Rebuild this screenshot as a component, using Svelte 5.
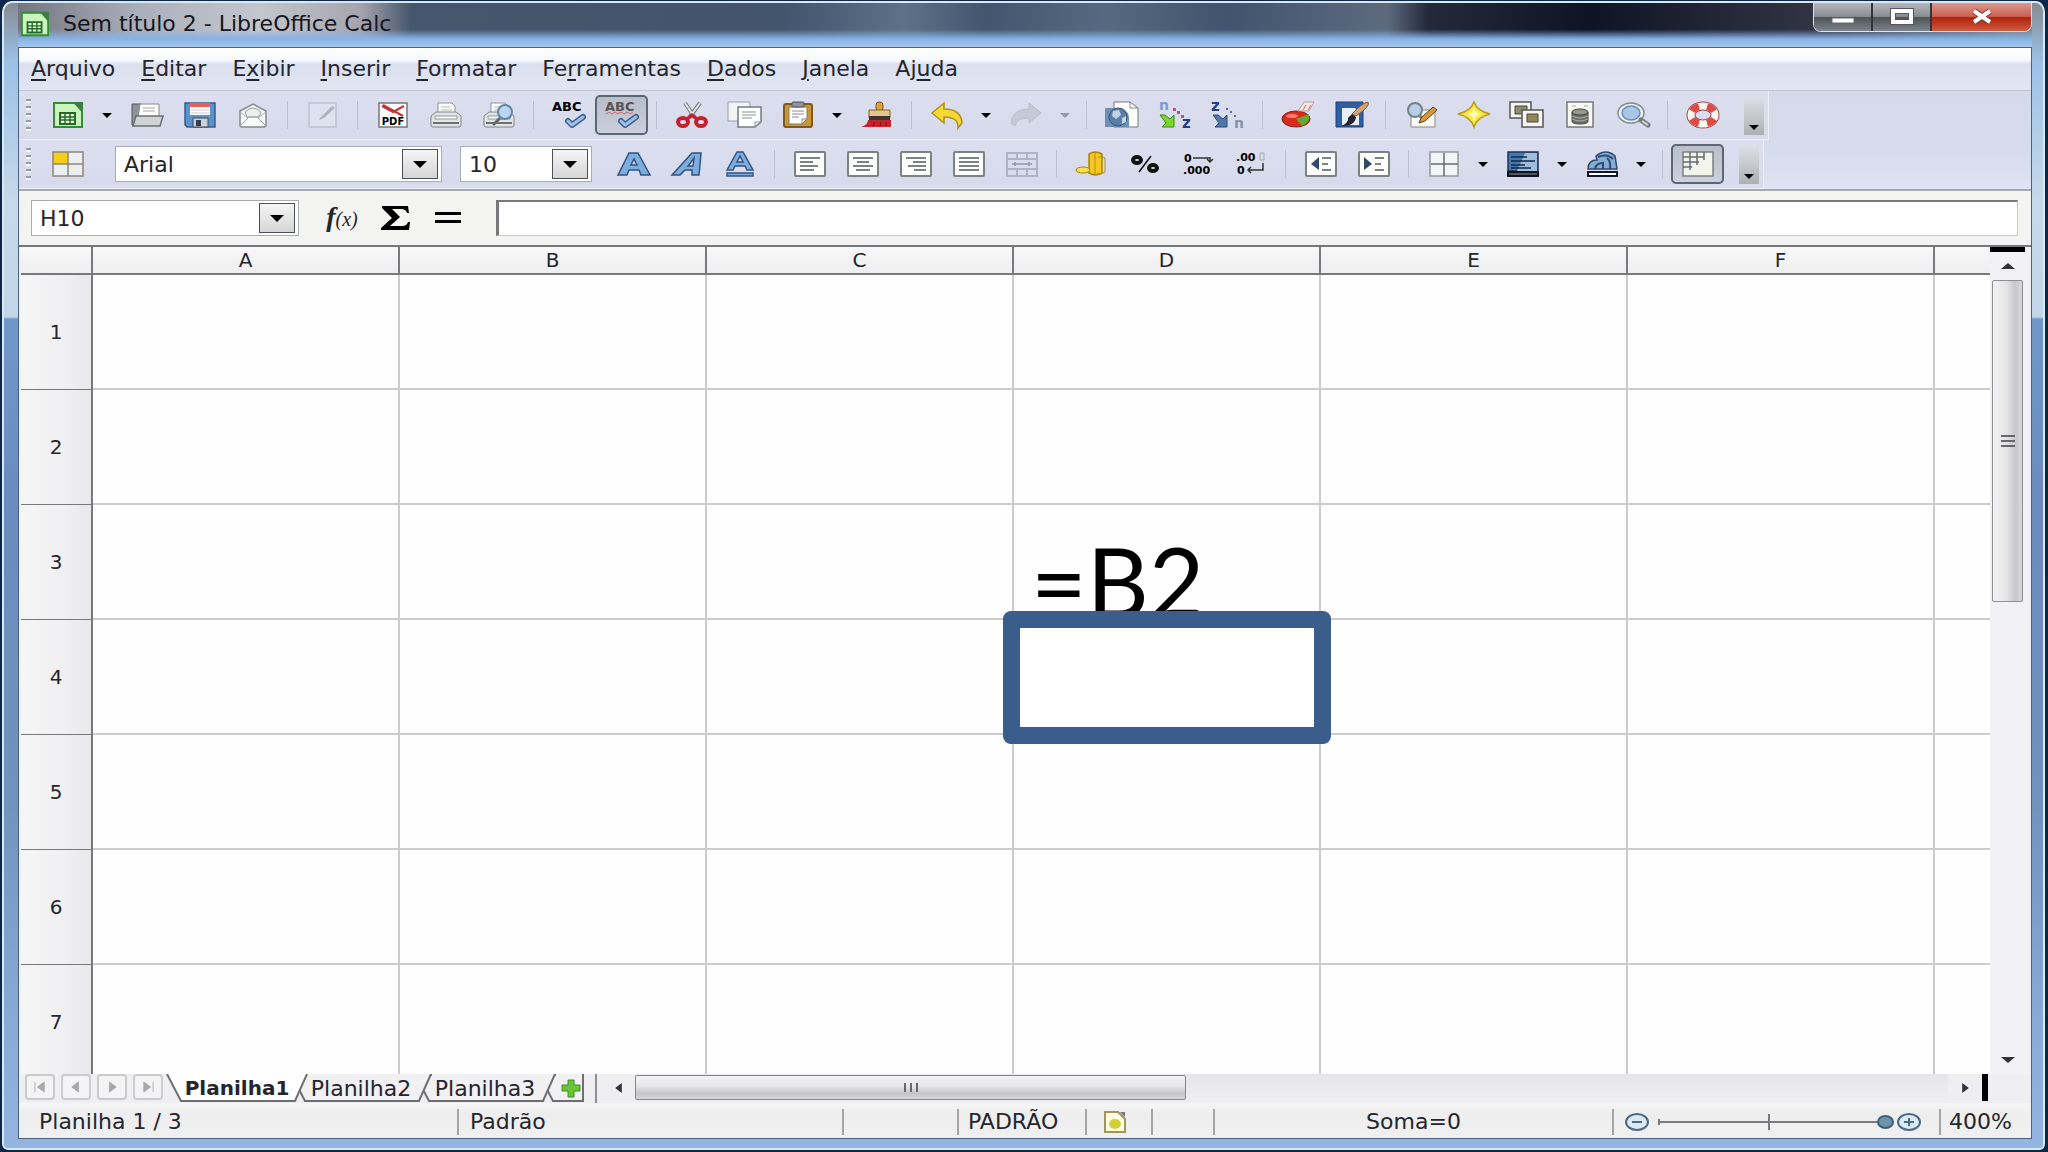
<script lang="ts">
  type Tool = {
    kind?: "button" | "sep" | "arrow";
    icon?: string;
    label?: string;
    pressed?: boolean;
    off?: boolean;
  };

  const sep: Tool = { kind: "sep" };
  const arrow: Tool = { kind: "arrow", label: "Mais opções" };
  const arrowOff: Tool = { kind: "arrow", label: "Mais opções", off: true };

  const menus = [
    ["", "A", "rquivo"],
    ["", "E", "ditar"],
    ["E", "x", "ibir"],
    ["", "I", "nserir"],
    ["", "F", "ormatar"],
    ["Fe", "r", "ramentas"],
    ["", "D", "ados"],
    ["", "J", "anela"],
    ["Aj", "u", "da"],
  ];

  const standard: Tool[] = [
    { icon: "new", label: "Novo" },
    arrow,
    { icon: "open", label: "Abrir" },
    { icon: "save", label: "Salvar" },
    { icon: "mail", label: "Enviar por e-mail" },
    sep,
    { icon: "edit", label: "Editar arquivo", off: true },
    sep,
    { icon: "pdf", label: "Exportar como PDF" },
    { icon: "print", label: "Imprimir" },
    { icon: "preview", label: "Visualizar página" },
    sep,
    { icon: "spell", label: "Verificação ortográfica" },
    { icon: "autospell", label: "Autoverificação", pressed: true },
    sep,
    { icon: "cut", label: "Cortar" },
    { icon: "copy", label: "Copiar" },
    { icon: "paste", label: "Colar" },
    arrow,
    { icon: "brush", label: "Pincel de formatação" },
    sep,
    { icon: "undo", label: "Desfazer" },
    arrow,
    { icon: "redo", label: "Refazer", off: true },
    arrowOff,
    sep,
    { icon: "link", label: "Hiperlink" },
    { icon: "sortaz", label: "Ordem crescente" },
    { icon: "sortza", label: "Ordem decrescente" },
    sep,
    { icon: "chart", label: "Gráfico" },
    { icon: "draw", label: "Desenho" },
    sep,
    { icon: "find", label: "Localizar e substituir" },
    { icon: "navigator", label: "Navegador" },
    { icon: "gallery", label: "Galeria" },
    { icon: "datasource", label: "Fontes de dados" },
    { icon: "zoom", label: "Zoom" },
    sep,
    { icon: "help", label: "Ajuda" },
  ];

  const formatting: Tool[] = [
    { icon: "bold", label: "Negrito" },
    { icon: "italic", label: "Itálico" },
    { icon: "underline", label: "Sublinhado" },
    sep,
    { icon: "left", label: "Alinhar à esquerda" },
    { icon: "center", label: "Centralizar" },
    { icon: "right", label: "Alinhar à direita" },
    { icon: "justify", label: "Justificar" },
    { icon: "merge", label: "Mesclar células", off: true },
    sep,
    { icon: "currency", label: "Moeda" },
    { icon: "percent", label: "Porcentagem" },
    { icon: "adddec", label: "Adicionar casa decimal" },
    { icon: "deldec", label: "Excluir casa decimal" },
    sep,
    { icon: "outdent", label: "Diminuir recuo" },
    { icon: "indent", label: "Aumentar recuo" },
    sep,
    { icon: "borders", label: "Bordas" },
    arrow,
    { icon: "linecolor", label: "Cor da linha" },
    arrow,
    { icon: "fill", label: "Cor do plano de fundo" },
    arrow,
    sep,
    { icon: "gridlines", label: "Linhas de grade", pressed: true },
  ];

  const page = `<rect x="1" y="1" width="30" height="24" rx="1" fill="#fdfdfb" stroke="#7c8182" stroke-width="2"/>`;
  const tick = `<path d="M15 19l4 4 11-8" fill="none" stroke="#3f608f" stroke-width="6" stroke-linecap="round" stroke-linejoin="round"/><path d="M15 19l4 4 11-8" fill="none" stroke="#9fc0ea" stroke-width="3" stroke-linecap="round" stroke-linejoin="round"/>`;
  const printer = `<path d="M8 12V1h14l3 3v8z" fill="#fff" stroke="#8d9199"/><path d="M11 5h9M11 8h11" stroke="#b5b8bd"/><path d="M1 14l5-4h20l5 4v9q0 2-2 2H3q-2 0-2-2z" fill="#e3e4e6" stroke="#7f8389"/><path d="M5 14h22v3H5z" fill="#fbfbfb" stroke="#999"/><path d="M3 21h26" stroke="#6d7176" stroke-width="2"/>`;

  const icons: Record<string, string> = {
    new: `<path d="M2 1h21l7 8v16H2z" fill="#c9f5bd" stroke="#2f8f35" stroke-width="2"/><path d="M21 0h10v10z" fill="#3d7c43"/><path d="M8 11h15v11H8z" fill="#eaffdf" stroke="#246b26" stroke-width="2"/><path d="M8 15h15M8 18h15M13 11v11M18 11v11" stroke="#246b26" stroke-width="1.5"/>`,
    open: `<path d="M1 23V2h9l2 3h6v18z" fill="#8f9398" stroke="#55595e"/><path d="M9 2h19v14H7z" fill="#fdfdfd" stroke="#888"/><path d="M12 6h12M12 9h12" stroke="#aaa"/><path d="M5 14h27l-3 10H2z" fill="#d2d4d3" stroke="#6b6f72" stroke-width="1.5"/>`,
    save: `<path d="M1 1h30v24H3l-2-2z" fill="#5b93c9" stroke="#345f8f" stroke-width="1.5"/><path d="M6 1h20v12H6z" fill="#fff"/><path d="M6 1h20v4H6z" fill="#ee5a55"/><path d="M7 8h18M7 11h18" stroke="#ccd"/><path d="M9 16h15v9H9z" fill="#cdd2d6" stroke="#3c4b5c"/><path d="M12 18h5v6h-5z" fill="#35404a"/>`,
    mail: `<path d="M3 9l13-7 13 7v14q0 2-2 2H5q-2 0-2-2z" fill="#fafafa" stroke="#85898f" stroke-width="1.5"/><path d="M8 10q8-8 16 0l-2 5H10z" fill="#eee" stroke="#999"/><path d="M3 24l9-9h8l9 9M3 10l8 6M29 10l-8 6" fill="none" stroke="#a3a6aa"/>`,
    edit: `<g opacity=".55"><path d="M2 1h27v24H2z" fill="#e3e6f0" stroke="#a9adb8" stroke-width="1.5"/><path d="M13 16l12-12 3 2-11 10-5 2z" fill="#8f939e"/></g>`,
    pdf: `<path d="M2 1h28v24H2z" fill="#fff" stroke="#777" stroke-width="1.5"/><path d="M5 4l11 6 11-6M6 3l20 11" fill="none" stroke="#c7323c" stroke-width="2"/><text x="16" y="23" text-anchor="middle" font-size="10" font-weight="700">PDF</text>`,
    print: printer,
    preview: `${printer}<circle cx="22" cy="10" r="7" fill="#bcd6ee" stroke="#5f86ad" stroke-width="2"/><path d="M17 16l-7 7" stroke="#666a70" stroke-width="3"/>`,
    spell: `<text x="-1" y="9" font-size="13" font-weight="700">ABC</text>${tick}`,
    autospell: `<text x="-1" y="9" font-size="13" font-weight="700" fill="#555">ABC</text><path d="M0 12l3-2 3 2 3-2 3 2 3-2 3 2 3-2 3 2 3-2" fill="none" stroke="#c66"/>${tick}`,
    cut: `<path d="M9 1l10 15M24 1L13 16" stroke="#70757c" stroke-width="4"/><path d="M9 1l10 15M24 1L13 16" stroke="#e4e7ea" stroke-width="2"/><ellipse cx="7" cy="20" rx="5" ry="4" fill="none" stroke="#c51f2c" stroke-width="4"/><ellipse cx="25" cy="20" rx="5" ry="4" fill="none" stroke="#c51f2c" stroke-width="4"/><path d="M11 17l5-4 5 4" fill="none" stroke="#c51f2c" stroke-width="3"/>`,
    copy: `<path d="M-1 0h22v19H-1z" fill="#f2f3f4" stroke="#9a9ea3"/><path d="M9 5h23v15l-6 5H9z" fill="#fff" stroke="#777b80" stroke-width="1.5"/><path d="M13 10h14M13 13h14M13 16h10M26 25v-5h6" fill="none" stroke="#8b8f93"/>`,
    paste: `<rect x="2" y="2" width="28" height="23" rx="2" fill="#c9963b" stroke="#805a17" stroke-width="2"/><path d="M7 5h18v12l-5 5H7z" fill="#fff" stroke="#8a7a55"/><rect x="10" y="0" width="12" height="5" rx="1" fill="#8f959a" stroke="#555"/><path d="M10 9h12M10 12h12M10 15h7M20 22v-5h5" fill="none" stroke="#889"/>`,
    brush: `<rect x="15" y="0" width="7" height="9" rx="3" fill="#d9a441" stroke="#7c5413"/><path d="M8 8h21v8H8z" fill="#e7c48a" stroke="#80602c"/><path d="M8 14h21v4H8z" fill="#3c3537"/><path d="M7 18h23v7H0q7-2 7-7z" fill="#c9212b"/><path d="M12 24l2-4M19 24l1-4M25 24v-4" stroke="#7c0f16"/>`,
    undo: `<path d="M1 11L13 1v6q17 0 18 14l-4 5q1-11-14-11v6z" fill="#f7d936" stroke="#b58f14" stroke-width="1.5"/>`,
    redo: `<path d="M31 11L19 1v6Q2 7 1 21l4 3q1-8 14-8v5z" fill="#c6cad4" stroke="#b9bdc9"/>`,
    link: `<path d="M8 0h16l8 6v19H8z" fill="#fff" stroke="#777"/><path d="M24 0v6h8" fill="none" stroke="#888"/><path d="M-1 6h17q7 4 7 10v9H-1z" fill="#6c8fb3"/><circle cx="12" cy="15" r="9" fill="#5a7fa8" stroke="#3a5879"/><path d="M7 9l6-1 2 5-5 4-4-3zM16 16l4-2v6l-4 2z" fill="#c2d4e4"/>`,
    sortaz: `<text x="0" y="8" font-size="14" font-weight="700" fill="#7a98d6">n</text><text x="23" y="26" font-size="15" font-weight="700" fill="#24407e">z</text><path d="M14 6h3v3h-3zM18 9h3v3h-3zM22 13h3v3h-3z" fill="#b2558a"/><path d="M1 13l5 0 5 4 4-4v12H3l4-4z" fill="#7cd62c" stroke="#3d8b17"/>`,
    sortza: `<text x="-1" y="9" font-size="15" font-weight="700" fill="#24407e">z</text><text x="22" y="26" font-size="14" font-weight="700" fill="#8393ac">n</text><path d="M14 6h2v2h-2zM18 9h2v2h-2zM22 13h2v2h-2z" fill="#5b6c9b"/><path d="M1 13l5 0 5 4 4-4v12H3l4-4z" fill="#4d78a8" stroke="#2c4e77"/>`,
    chart: `<ellipse cx="14" cy="17" rx="14" ry="8" fill="#d92a1c" stroke="#8c1d14"/><path d="M14 17l13-5q2 8-7 12z" fill="#67a832"/><ellipse cx="10" cy="14" rx="6" ry="2" fill="#ff7d6b"/><path d="M16 9l6-9h10l-5 9z" fill="#f4e6e2" stroke="#b99"/><path d="M21 8l3-5M26 8l3-5" stroke="#c77"/>`,
    draw: `<path d="M1 0h27v25H1z" fill="#2e5ea3" stroke="#1d3f73"/><path d="M7 6h13l4 4v13H7z" fill="#e8eef6"/><path d="M33 0q3 4-12 14l-4-2Q27 1 33 0z" fill="#d6a374" stroke="#7d5833"/><path d="M17 12l4 3q-1 9-14 9 7-4 6-8z" fill="#23262c"/>`,
    find: `<path d="M6 8h24v17H6z" fill="#fbfbf8" stroke="#888"/><circle cx="10" cy="8" r="7" fill="#b6d0e4" stroke="#74828c" stroke-width="2"/><path d="M15 14l3 3" stroke="#777" stroke-width="3"/><path d="M14 21l2-5L28 5l4 3-12 11z" fill="#d49a3d" stroke="#5f4212"/>`,
    navigator: `<path d="M16 0q3 9 16 12-13 3-16 13Q13 15 0 12 13 9 16 0z" fill="#fbe94b" stroke="#b79a1a" stroke-width="1.5"/><path d="M16 6q1 5 7 6-6 1-7 7-1-6-7-7 6-1 7-6z" fill="#fffbb5"/>`,
    gallery: `<path d="M-1 0h21v16H-1z" fill="#f6f6ee" stroke="#555" stroke-width="1.5"/><path d="M4 4h12v8H4z" fill="#8b8e68" stroke="#444"/><path d="M11 8h21v17H11z" fill="#f6f6ee" stroke="#555" stroke-width="1.5"/><path d="M16 12h11v8H16z" fill="#8e8a55" stroke="#444"/>`,
    datasource: `<path d="M3 0h26v25H3z" fill="#fafaf5" stroke="#777" stroke-width="1.5"/><path d="M8 10v9q0 3 8 3t8-3v-9z" fill="#6b7069" stroke="#3f433d"/><ellipse cx="16" cy="10" rx="8" ry="3" fill="#949a90" stroke="#3f433d"/><path d="M8 14q8 4 16 0M8 17q8 4 16 0" fill="none" stroke="#a9afa5"/><path d="M8 4h4M20 4h4" stroke="#aaa"/>`,
    zoom: `<ellipse cx="14" cy="11" rx="13" ry="10" fill="#f3f4f5" stroke="#858b92" stroke-width="1.5"/><ellipse cx="14" cy="11" rx="9" ry="7" fill="#a8c8ea" stroke="#6a8db3" stroke-width="1.5"/><path d="M24 18l7 5" stroke="#777c83" stroke-width="5" stroke-linecap="round"/><path d="M25 19l6 4" stroke="#d5d8da" stroke-width="2"/>`,
    help: `<ellipse cx="16" cy="13" rx="12" ry="9" fill="none" stroke="#a84640" stroke-width="9"/><ellipse cx="16" cy="13" rx="12" ry="9" fill="none" stroke="#fbf5f2" stroke-width="7"/><ellipse cx="16" cy="13" rx="12" ry="9" fill="none" stroke="#df4a43" stroke-width="7" pathLength="80" stroke-dasharray="10 10" stroke-dashoffset="-5"/>`,
    bold: `<path d="M0 24L11 2h9l12 22h-9l-2-5H11l-2 5zM13 14h6l-3-6z" fill="#7eaddf" fill-rule="evenodd" stroke="#31547f" stroke-width="1.5"/>`,
    italic: `<path d="M1 24L21 2h9l-2 22h-7v-5h-7l-5 5zM17 15h5l1-8z" fill="#7eaddf" fill-rule="evenodd" stroke="#31547f" stroke-width="1.5"/>`,
    underline: `<path d="M3 19L13 1h6l10 18h-6l-2-4H11l-2 4zM13 11h6l-3-6z" fill="#7eaddf" fill-rule="evenodd" stroke="#31547f" stroke-width="1.5"/><path d="M3 22h26v3H3z" fill="#7eaddf" stroke="#31547f" stroke-width="1.5"/>`,
    left: `${page}<path d="M6 7h20M6 11h13M6 15h18M6 19h14" stroke="#55595b" stroke-width="1.5"/>`,
    center: `${page}<path d="M6 7h20M10 11h12M6 15h20M9 19h14" stroke="#55595b" stroke-width="1.5"/>`,
    right: `${page}<path d="M6 7h20M13 11h13M8 15h18M14 19h12" stroke="#55595b" stroke-width="1.5"/>`,
    justify: `${page}<path d="M6 7h20M6 11h20M6 15h20M6 19h20" stroke="#55595b" stroke-width="1.5"/>`,
    merge: `<path d="M1 2h30v23H1zM1 8h30M1 18h30M11 2v6M21 2v6M11 18v7M21 18v7" fill="none" stroke="#aeb3c2" stroke-width="2"/><path d="M6 13h20M9 11v4M23 11v4" stroke="#9298a8" stroke-width="1.5"/>`,
    currency: `<path d="M13 3q6-4 13 0v19q-6 4-13 0z" fill="#f5c91f" stroke="#a8800e" stroke-width="1.5"/><path d="M19 2v21M22 6q5-1 7 1v14q-3 3-8 1" fill="none" stroke="#b88f12"/><ellipse cx="7" cy="19" rx="7" ry="3" fill="#fbe05a" stroke="#a8800e"/>`,
    percent: `<ellipse cx="8" cy="9" rx="4" ry="3" fill="none" stroke="#111" stroke-width="4"/><ellipse cx="24" cy="17" rx="4" ry="3" fill="none" stroke="#111" stroke-width="4"/><path d="M22 5L10 21" stroke="#111" stroke-width="1.5"/>`,
    adddec: `<text x="2" y="11" font-size="11" font-weight="700">0</text><path d="M11 7h17v4M25 8l3 3 3-3" fill="none" stroke="#333" stroke-width="1.5"/><text x="1" y="23" font-size="11" font-weight="700">.000</text>`,
    deldec: `<text x="1" y="10" font-size="11" font-weight="700">.00</text><path d="M25 2h4v7h-4z" fill="none" stroke="#aaa"/><text x="2" y="23" font-size="11" font-weight="700">0</text><path d="M28 12v7H13M16 16l-3 3 3 3" fill="none" stroke="#333" stroke-width="1.5"/>`,
    outdent: `${page}<path d="M14 6v13l-8-6z" fill="#33496b"/><path d="M17 7h9M17 13h6M17 19h9" stroke="#55595b" stroke-width="1.5"/>`,
    indent: `${page}<path d="M6 6v13l8-6z" fill="#33496b"/><path d="M17 7h9M17 13h6M17 19h9" stroke="#55595b" stroke-width="1.5"/>`,
    borders: `<path d="M2 1h28v24H2z" fill="#f3f4f4" stroke="#92979c" stroke-width="1.5"/><path d="M16 2v23M3 13h27" stroke="#676b70" stroke-width="1.5"/>`,
    linecolor: `<path d="M1 1h30v19H1z" fill="#4478b0" stroke="#1f3555" stroke-width="1.5"/><path d="M18 2h12v18H10z" fill="#9dbddb"/><path d="M4 6h16M4 10h24M4 14h14M4 17h20" stroke="#13294a" stroke-width="1.5"/><path d="M1 21h30v4H1z" fill="#555" stroke="#0c1322" stroke-width="2"/>`,
    fill: `<path d="M2 18q0-9 9-9l-1-4q10-8 19 0l2 13z" fill="#86acd2" stroke="#2c4a72" stroke-width="1.5"/><path d="M9 18q1-6 8-6v6M21 7q4 3 3 11M12 6q9-4 15 2" fill="none" stroke="#2c4a72" stroke-width="2"/><path d="M2 21h29v4H2z" fill="#fff" stroke="#10182c" stroke-width="2"/>`,
    gridlines: `<path d="M1 1h30v24H1z" fill="#f3f4ea" stroke="#7b8085" stroke-width="1.5"/><path d="M1 6h21M1 11h16M1 16h9M8 1v18M15 1v13M22 1v8" stroke="#666b70" stroke-width="1.5"/>`,
  };

  const columns = ["A", "B", "C", "D", "E", "F", ""];
  const rows = [1, 2, 3, 4, 5, 6, 7];
  const sheets = ["Planilha1", "Planilha2", "Planilha3"];
  const sheetNav = [
    ["Primeira planilha", "M9 7v12M20 7v12l-8-6z"],
    ["Planilha anterior", "M18 7v12l-8-6z"],
    ["Próxima planilha", "M12 7v12l8-6z"],
    ["Última planilha", "M10 7v12l8-6zM21 7v12"],
  ];

  let activeSheet = $state("Planilha1");
  let font = $state("Arial");
  let size = $state("10");
  let cellRef = $state("H10");
  let formula = $state("");
  let zoom = $state(400);
</script>

{#snippet caret()}
  <svg class="caret" viewBox="0 0 12 6" aria-hidden="true"><path d="M0 0h12L6 6z" /></svg>
{/snippet}

{#snippet tools(items: Tool[])}
  {#each items as tool}
    {#if tool.kind === "sep"}
      <span class="sep"></span>
    {:else if tool.kind === "arrow"}
      <button class="drop" class:off={tool.off} aria-label={tool.label}>{@render caret()}</button>
    {:else}
      <button class="tool" aria-label={tool.label} aria-pressed={tool.pressed}>
        <span class="face" class:pressed={tool.pressed}>
          <svg viewBox="0 0 32 26" aria-hidden="true">{@html icons[tool.icon ?? ""]}</svg>
        </span>
      </button>
    {/if}
  {/each}
{/snippet}

<div class="window">
  <header class="titlebar">
    <svg class="app-icon" viewBox="0 0 32 26" aria-hidden="true">{@html icons.new}</svg>
    <h1>Sem título 2 - LibreOffice Calc</h1>
    <div class="controls">
      <button class="min" aria-label="Minimizar">
        <svg viewBox="0 0 24 20"><path d="M1 11h22v5H1z" fill="#fff" stroke="#667" /></svg>
      </button>
      <button class="max" aria-label="Maximizar">
        <svg viewBox="0 0 24 20"><path d="M3 4h18v11H3z" fill="none" stroke="#556" stroke-width="6" /><path d="M3 4h18v11H3z" fill="none" stroke="#fff" stroke-width="4" /></svg>
      </button>
      <button class="close" aria-label="Fechar">
        <svg viewBox="0 0 24 20"><path d="M4 4l16 11M20 4L4 15" stroke="#7c3a35" stroke-width="6" /><path d="M4 4l16 11M20 4L4 15" stroke="#fff" stroke-width="4" /></svg>
      </button>
    </div>
  </header>

  <main class="client">
    <nav class="menubar">
      {#each menus as [before, key, after]}
        <button>{before}<u>{key}</u>{after}</button>
      {/each}
    </nav>

    <div class="toolbars">
      <div class="toolbar">
        <span class="grip"></span>
        {@render tools(standard)}
        <button class="overflow" aria-label="Mais botões">{@render caret()}</button>
      </div>
      <div class="toolbar">
        <span class="grip"></span>
        <button class="tool" aria-label="Estilos e formatação">
          <span class="face">
            <svg viewBox="0 0 32 26" aria-hidden="true">
              <path d="M1 1h30v24H1z" fill="#eceef2" />
              <path d="M1 1h15v12H1z" fill="#f5cf1b" />
              <path d="M1 1h30v24H1zM1 13h30M16 1v24" fill="none" stroke="#8d8676" stroke-width="1.5" />
            </svg>
          </span>
        </button>
        <label class="combo font">
          <select bind:value={font} aria-label="Nome da fonte">
            <option>Arial</option>
            <option>Calibri</option>
          </select>
          <span class="combo-arrow">{@render caret()}</span>
        </label>
        <label class="combo size">
          <select bind:value={size} aria-label="Tamanho da fonte">
            <option>10</option>
            <option>12</option>
          </select>
          <span class="combo-arrow">{@render caret()}</span>
        </label>
        {@render tools(formatting)}
        <button class="overflow" aria-label="Mais botões">{@render caret()}</button>
      </div>
    </div>

    <div class="formulabar">
      <div class="combo name">
        <input bind:value={cellRef} aria-label="Caixa de nome" />
        <button class="combo-arrow" aria-label="Intervalos nomeados">{@render caret()}</button>
      </div>
      <div class="formula-tools">
        <button class="fx" aria-label="Assistente de funções">f<small>(x)</small></button>
        <button aria-label="Soma">
          <svg viewBox="0 0 32 26"><path d="M2 1h26l1 7h-2q-1-4-6-4H12l8 8-10 9h12q5 0 6-4h2l-1 8H1v-2l11-10L2 3z" /></svg>
        </button>
        <button aria-label="Função">
          <svg viewBox="0 0 32 26"><path d="M3 7h26v3H3zM3 15h26v3H3z" /></svg>
        </button>
      </div>
      <input class="formula" bind:value={formula} aria-label="Linha de entrada" />
    </div>

    <div class="work">
      <div class="sheet">
        <table>
          <colgroup>
            <col class="rowhead" />
            {#each columns as name}
              <col class={name ? "cell" : "rest"} />
            {/each}
          </colgroup>
          <thead>
            <tr>
              <th></th>
              {#each columns as name}
                <th scope="col">{name}</th>
              {/each}
            </tr>
          </thead>
          <tbody>
            {#each rows as row}
              <tr>
                <th scope="row">{row}</th>
                {#each columns as _}
                  <td></td>
                {/each}
              </tr>
            {/each}
          </tbody>
        </table>
        <div class="entry">=B2</div>
        <div class="cursor"></div>
      </div>

      <div class="vscroll">
        <span class="splitter"></span>
        <button aria-label="Rolar para cima"><svg viewBox="0 0 14 6"><path d="M0 6h14L7 0z" /></svg></button>
        <div class="vtrack">
          <div class="vthumb"><i></i><i></i><i></i></div>
        </div>
        <button aria-label="Rolar para baixo"><svg viewBox="0 0 14 6"><path d="M0 0h14L7 6z" /></svg></button>
      </div>
    </div>

    <div class="tabbar">
      <div class="sheet-nav">
        {#each sheetNav as [label, d]}
          <button aria-label={label}>
            <svg viewBox="0 0 30 26"><path {d} /></svg>
          </button>
        {/each}
      </div>
      <div class="tabs">
        {#each sheets as sheet}
          <button class="tab" class:active={sheet === activeSheet} onclick={() => (activeSheet = sheet)}>
            <svg viewBox="0 0 142 28" preserveAspectRatio="none" aria-hidden="true"><path d="M1 0l14 27h114l12-27" /></svg>
            <span>{sheet}</span>
          </button>
        {/each}
        <button class="tab add" aria-label="Adicionar planilha">
          <svg viewBox="0 0 46 28" aria-hidden="true">
            <path d="M1 0l14 27h30V0" />
            <path class="plus" d="M30 6h6v5h6v6h-6v6h-6v-6h-6v-6h6z" />
          </svg>
        </button>
      </div>
      <div class="hscroll">
        <button aria-label="Rolar para a esquerda"><svg viewBox="0 0 8 12"><path d="M8 0v12L0 6z" /></svg></button>
        <div class="htrack">
          <div class="hthumb"><i></i><i></i><i></i></div>
        </div>
        <button aria-label="Rolar para a direita"><svg viewBox="0 0 8 12"><path d="M0 0v12l8-6z" /></svg></button>
        <span class="hsplit"></span>
      </div>
    </div>

    <footer class="statusbar">
      <span class="s-sheet">Planilha 1 / 3</span>
      <span class="s-style">Padrão</span>
      <span class="s-lang"></span>
      <span class="s-mode">PADRÃO</span>
      <span class="s-doc">
        <svg viewBox="0 0 24 22" aria-hidden="true">
          <path d="M2 1h13l7 7v13H2z" fill="#fffbe6" stroke="#a3945a" stroke-width="2" />
          <ellipse cx="12" cy="13" rx="6" ry="5" fill="#d3cf36" />
          <path d="M17 1h5v5z" fill="#777" />
        </svg>
      </span>
      <span class="s-sign"></span>
      <span class="s-sum">Soma=0</span>
      <span class="s-slider">
        <button aria-label="Reduzir"><svg viewBox="0 0 24 20"><ellipse cx="12" cy="10" rx="11" ry="8" /><path d="M7 10h10" /></svg></button>
        <input type="range" min="20" max="400" bind:value={zoom} aria-label="Zoom" />
        <button aria-label="Ampliar"><svg viewBox="0 0 24 20"><ellipse cx="12" cy="10" rx="11" ry="8" /><path d="M7 10h10M12 6v8" /></svg></button>
      </span>
      <span class="s-zoom">{zoom}%</span>
    </footer>
  </main>
</div>

<style>
  :global(body) {
    background: #0d2846;
  }

  .window,
  .window * {
    box-sizing: border-box;
  }

  .window {
    display: flex;
    flex-direction: column;
    height: 100vh;
    padding: 2px 13px 11px 16px;
    border: solid #0d2846;
    border-width: 1px 3px 2px 2px;
    border-radius: 12px 12px 8px 8px;
    box-shadow: inset 0 0 0 2px #dbe8f2;
    background: linear-gradient(#85898f 0, #9cc0e6 60px, #c6d9ea 200px, #c3d6e8 316px, #6f98c8 318px, #6a8cbd 500px, #6f93bb 800px, #86a9d4 1000px, #93b5df 100%);
    font-family: "DejaVu Sans", "Noto Sans", sans-serif;
    font-size: 22px;
    color: #25252e;
  }

  button {
    padding: 0;
    border: 0;
    background: none;
    font: inherit;
    color: inherit;
  }

  svg {
    display: block;
  }

  .titlebar {
    flex: none;
    display: flex;
    align-items: center;
    height: 44px;
    padding: 0 0 2px 2px;
    background:
      linear-gradient(transparent 60%, #86b3e6 82%, #a5c8ee),
      linear-gradient(90deg, #74767f 0, #aab0ba 6%, #c3c6cd 12%, #a5a5ae 17%, #46566c 19.5%, #43546d 38%, #5d7188 44%, #43566f 48%, #55697f 54%, #40546d 60%, #5d6a7e 68%, #252a3a 70%, #0e1424 78%, #343645 90%, #7d868f 100%);
  }

  .app-icon {
    width: 30px;
    height: 26px;
  }

  h1 {
    flex: 1;
    margin: 0 0 0 13px;
    font-size: 22px;
    font-weight: 400;
    line-height: 40px;
    color: #15161f;
  }

  .controls {
    align-self: flex-start;
    display: flex;
    height: 29px;
    border: 1px solid #dfe4e8;
    border-top: 0;
    border-radius: 0 0 8px 8px;
    overflow: hidden;
  }

  .controls button {
    display: grid;
    place-items: center;
    width: 59px;
    border-right: 2px solid #31363c;
    background: linear-gradient(#b4b8bc, #888d92 48%, #4d5358 52%, #7d848a);
  }

  .controls .close {
    width: 99px;
    border-right: 0;
    background: linear-gradient(#dd9a8f, #cd5f50 48%, #b1220f 52%, #d05a3d);
  }

  .controls svg {
    width: 24px;
    height: 20px;
  }

  .client {
    flex: 1;
    min-height: 0;
    display: flex;
    flex-direction: column;
    border: 1px solid #4c617b;
    background: #f0f0f0;
  }

  .menubar {
    flex: none;
    display: flex;
    align-items: center;
    gap: 26px;
    height: 43px;
    padding-left: 12px;
    border-bottom: 1px solid #bfc5d3;
    background: linear-gradient(#fff, #f6f8fd 30%, #dbe0ef 38%, #e2e6f4);
  }

  .menubar button {
    line-height: 26px;
  }

  u {
    text-underline-offset: 3px;
  }

  .toolbars {
    flex: none;
    border-bottom: 2px solid #a6aab0;
    background: linear-gradient(#d4dae9, #d6dcec 60%, #dfe3f3);
  }

  .toolbar {
    display: flex;
    align-items: center;
    width: fit-content;
    height: 49px;
    padding-right: 4px;
    border-right: 1px solid #eef0f6;
    border-bottom: 1px solid #eff1f8;
    background: linear-gradient(#dddff0, #d6daeb);
  }

  .grip {
    width: 5px;
    height: 32px;
    margin: 0 10px 0 7px;
    background: repeating-linear-gradient(#9499a6 0 2px, #f6f7fb 2px 4px, transparent 4px 7px);
  }

  .tool {
    display: grid;
    place-items: center;
    width: 53px;
    height: 42px;
  }

  .face {
    display: grid;
    place-items: center;
    width: 53px;
    height: 40px;
    border: 2px solid transparent;
    border-radius: 5px;
  }

  .face.pressed {
    border-color: #5d6675;
    background: linear-gradient(#b9bec9, #cbd0dc);
  }

  .face svg {
    width: 32px;
    height: 26px;
    overflow: visible;
  }

  .drop {
    display: grid;
    place-items: center;
    width: 26px;
    height: 42px;
  }

  .off {
    opacity: 0.3;
  }

  .caret {
    width: 12px;
    height: 5px;
  }

  .sep {
    width: 17px;
    height: 28px;
    background: linear-gradient(90deg, transparent 8px, #bcc1cf 8px, #bcc1cf 9px, transparent 9px);
  }

  .overflow {
    display: flex;
    align-items: flex-end;
    justify-content: center;
    width: 20px;
    height: 40px;
    margin-left: 15px;
    padding-bottom: 5px;
    background: linear-gradient(#dfe0ea, #c9cace 50%, #adafb2);
  }

  .combo {
    display: flex;
    height: 36px;
    padding: 2px 3px;
    border: 1px solid #a9adb3;
    background: #fff;
  }

  .combo select,
  .combo input {
    flex: 1;
    min-width: 0;
    padding: 0 5px;
    border: 0;
    outline: 0;
    appearance: none;
    background: none;
    font: inherit;
    color: inherit;
  }

  .combo.font {
    width: 327px;
    margin-left: 21px;
  }

  .combo.size {
    width: 132px;
    margin: 0 15px 0 18px;
  }

  .combo-arrow {
    display: grid;
    place-items: center;
    width: 36px;
    border: 1px solid #4c4f53;
    background: linear-gradient(#f5f5f5, #d6d6d8);
    pointer-events: none;
  }

  .combo-arrow .caret {
    width: 16px;
    height: 7px;
  }

  .formulabar {
    flex: none;
    display: flex;
    align-items: center;
    height: 56px;
    padding: 0 13px 0 12px;
    border-bottom: 2px solid #75787c;
    background: linear-gradient(#f4f4f1, #f3f3f3);
  }

  .combo.name {
    width: 268px;
  }

  .formula-tools {
    display: flex;
    align-items: center;
    gap: 20px;
    margin: 0 32px 0 25px;
  }

  .formula-tools svg {
    width: 32px;
    height: 26px;
  }

  .fx {
    width: 36px;
    font-family: "Liberation Serif", serif;
    font-size: 28px;
    font-style: italic;
    font-weight: 700;
    line-height: 28px;
    white-space: nowrap;
  }

  .fx small {
    font-size: 20px;
    font-weight: 400;
  }

  .formula {
    flex: 1;
    min-width: 0;
    height: 36px;
    border: 1px solid #c9cacc;
    border-top: 2px solid #77797d;
    border-left: 3px solid #77797d;
    background: #fff;
    font: inherit;
  }

  .work {
    flex: 1;
    min-height: 0;
    display: flex;
    padding-left: 2px;
  }

  .sheet {
    position: relative;
    flex: 1;
    min-width: 0;
    overflow: hidden;
    background: #fefefe;
  }

  table {
    width: 100%;
    table-layout: fixed;
    border-collapse: separate;
    border-spacing: 0;
  }

  .rowhead {
    width: 72px;
  }

  .cell {
    width: 307px;
  }

  th {
    padding: 0;
    border: solid #77797d;
    border-width: 0 2px 1px 0;
    background: #f2f1f3;
    font-size: 20px;
    font-weight: 400;
    line-height: 26px;
  }

  thead th {
    height: 28px;
    border-bottom-width: 2px;
    background: linear-gradient(#f8f8f8, #efeef0);
  }

  tbody th {
    background: linear-gradient(90deg, #f6f6f6, #f0eff1 60%, #e9e8eb);
  }

  td {
    height: 115px;
    padding: 0;
    border: solid #cbcbd0;
    border-width: 0 2px 2px 0;
  }

  thead th:last-child,
  td:last-child {
    border-right: 0;
  }

  .entry {
    position: absolute;
    top: 276px;
    left: 1010px;
    font-family: Lato, sans-serif;
    font-size: 96px;
    line-height: 116px;
    color: #000;
  }

  .cursor {
    position: absolute;
    top: 364px;
    left: 982px;
    width: 328px;
    height: 133px;
    border: 17px solid #3b5d8c;
    border-radius: 8px;
    background: #fff;
  }

  .vscroll {
    flex: none;
    display: flex;
    flex-direction: column;
    width: 41px;
    padding-right: 6px;
    background: #f2f1f3;
  }

  .splitter {
    height: 5px;
    background: #000;
  }

  .vscroll button {
    display: grid;
    place-items: center;
    height: 28px;
  }

  .vscroll svg {
    width: 14px;
    height: 6px;
    fill: #333;
  }

  .vtrack {
    flex: 1;
  }

  .vthumb {
    display: flex;
    flex-direction: column;
    align-items: center;
    justify-content: center;
    gap: 3px;
    height: 42%;
    margin: 0 2px;
    border: 1px solid #8e8f93;
    border-radius: 2px;
    background: linear-gradient(90deg, #f3f3f3, #e6e5e8 45%, #c9c8cc 75%, #d8d7da);
  }

  .vthumb i {
    width: 14px;
    height: 2px;
    background: #66686c;
  }

  .tabbar {
    flex: none;
    display: flex;
    height: 29px;
    padding-left: 6px;
    background: #efeef0;
  }

  .sheet-nav {
    display: flex;
    gap: 6px;
  }

  .sheet-nav button {
    width: 30px;
    height: 26px;
    border: 2px solid #c9cacc;
    border-radius: 4px;
    background: #f4f4f4;
  }

  .sheet-nav svg {
    width: 26px;
    height: 22px;
    fill: #a6a8ab;
    stroke: #a6a8ab;
  }

  .tabs {
    flex: none;
    display: flex;
    width: 434px;
    padding-left: 3px;
    border-right: 2px solid #8e9094;
  }

  .tab {
    position: relative;
    flex: none;
    width: 142px;
    height: 28px;
    margin-right: -18px;
    line-height: 24px;
  }

  .tab:nth-child(1) {
    z-index: 3;
  }

  .tab:nth-child(2) {
    z-index: 2;
  }

  .tab:nth-child(3) {
    z-index: 1;
  }

  .tab svg {
    position: absolute;
    inset: 0;
    width: 100%;
    height: 28px;
    fill: #f1f0f2;
    stroke: #6d6f73;
    stroke-width: 2px;
  }

  .tab:not(.active) {
    border-top: 2px solid #77797d;
    line-height: 22px;
  }

  .tab:not(.active) svg {
    top: -2px;
  }

  .tab.active svg {
    fill: #fff;
  }

  .tab.active {
    font-size: 20px;
    font-weight: 700;
  }

  .tab span {
    position: relative;
  }

  .tab.add {
    width: 46px;
    margin-right: 0;
  }

  .tab .plus {
    fill: #6cc43a;
    stroke: #3f8d22;
    stroke-width: 1px;
  }

  .hscroll {
    flex: 1;
    min-width: 0;
    display: flex;
    padding: 0 43px 0 4px;
  }

  .hscroll button {
    display: grid;
    place-items: center;
    width: 34px;
    height: 27px;
  }

  .hscroll svg {
    width: 7px;
    height: 10px;
    fill: #333;
  }

  .htrack {
    flex: 1;
    background: linear-gradient(#e6e5e7, #efeef0);
  }

  .hthumb {
    display: flex;
    align-items: center;
    justify-content: center;
    gap: 4px;
    width: 42%;
    height: 25px;
    margin-top: 1px;
    border: 1px solid #85868a;
    border-radius: 2px;
    background: linear-gradient(#f3f3f3, #e5e4e7 45%, #c6c5c9 75%, #d6d5d8);
  }

  .hthumb i {
    width: 2px;
    height: 9px;
    background: #66686c;
  }

  .hsplit {
    width: 6px;
    height: 27px;
    background: #000;
  }

  .statusbar {
    flex: none;
    display: flex;
    align-items: center;
    height: 35px;
    padding-top: 3px;
    background: linear-gradient(#f6f6f6, #eeeeee 30%, #f0f0f0);
    line-height: 26px;
  }

  .statusbar > span {
    flex: none;
    height: 26px;
    padding-left: 11px;
    border-right: 2px solid #a3a5a8;
  }

  .statusbar .s-sheet {
    width: 440px;
    padding-left: 20px;
  }

  .statusbar .s-style {
    width: 385px;
  }

  .statusbar .s-lang {
    width: 115px;
  }

  .statusbar .s-mode {
    width: 128px;
    padding-left: 9px;
  }

  .statusbar .s-doc {
    width: 66px;
    padding: 2px 0 0 16px;
  }

  .s-doc svg {
    width: 24px;
    height: 22px;
  }

  .statusbar .s-sign {
    width: 62px;
  }

  .statusbar .s-sum {
    flex: 1;
    padding: 0;
    text-align: center;
  }

  .statusbar .s-slider {
    display: flex;
    align-items: center;
    width: 327px;
  }

  .s-slider svg {
    width: 24px;
    height: 20px;
    fill: #dbe9f3;
    stroke: #486a86;
    stroke-width: 2px;
  }

  .s-slider input {
    width: 236px;
    height: 22px;
    margin: 0 3px 0 9px;
    appearance: none;
    background:
      linear-gradient(#777a7e, #777a7e) 47% 50% / 2px 16px no-repeat,
      linear-gradient(#777a7e, #777a7e) 0 50% / 2px 6px no-repeat,
      linear-gradient(#777a7e, #777a7e) 0 50% / 100% 2px no-repeat;
  }

  .s-slider input::-webkit-slider-thumb {
    appearance: none;
    width: 17px;
    height: 14px;
    border: 2px solid #3f5f78;
    border-radius: 50%;
    background: #6f93ad;
  }

  .statusbar .s-zoom {
    width: 90px;
    padding-left: 8px;
    border-right: 0;
  }
</style>
